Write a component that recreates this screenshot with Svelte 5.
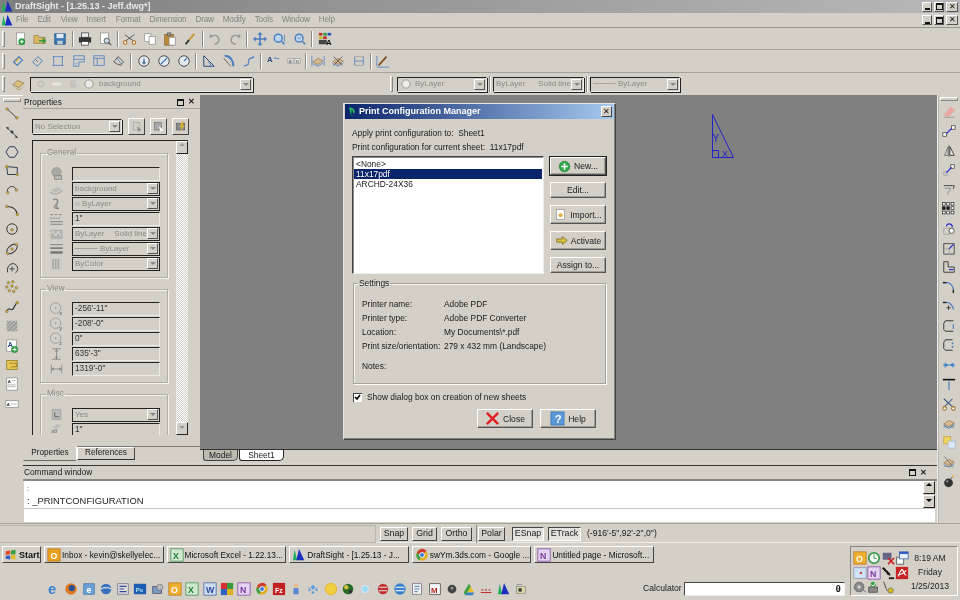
<script>
const BL='#4a7cc0', DK='#3a3a3a', YE='#d8b030', GR='#2fa84a', GY='#9a9a96';
const L=(d,c=BL,w=1.1)=>`<path d="${d}" fill="none" stroke="${c}" stroke-width="${w}"/>`;
const F=(d,c)=>`<path d="${d}" fill="${c}"/>`;
const R=(x,y,w,h,f,s='none')=>`<rect x="${x}" y="${y}" width="${w}" height="${h}" fill="${f}" stroke="${s}" stroke-width="0.8"/>`;
const C=(x,y,r,f,s='none',w=1)=>`<circle cx="${x}" cy="${y}" r="${r}" fill="${f}" stroke="${s}" stroke-width="${w}"/>`;
const N=(x,y,c=YE)=>C(x,y,1.5,c,'#555',0.5);
const T=(x,y,t,c='#222',s=8,b='bold')=>`<text x="${x}" y="${y}" font-family="Liberation Sans" font-size="${s}" font-weight="${b}" fill="${c}">${t}</text>`;
const plus=(x,y)=>C(x,y,3.6,GR,'#1c7a30',0.6)+L(`M${x-2} ${y}h4M${x} ${y-2}v4`,'#fff',1.1);
const page=(x,y,w,h)=>R(x,y,w,h,'#fff','#8a8a8a');
const layer=F('M2 9l6-4 6 3-6 4z','#d8b890')+L('M2 9l6-4 6 3-6 4z','#8a6a40',.7)+L('M2 11l6 3 6-4',BL,.9);
const logo=F('M3 2L1 14h5z','#20b060')+F('M8 1L5 14h9z','#1a2fc0');

const icons={
 new:page(4,1,9,13)+plus(10,11),
 open:F('M1 4h5l1 2h7v7H1z','#d8b860')+L('M1 4h5l1 2h7v7H1z','#8a7030',.7)+L('M7 10h7m-3-3l3 3-3 3','#2a9a40',1.5),
 save:R(2,2,12,12,'#3a78b8','#24507f')+R(4,2,8,5,'#dfe8f2')+R(5,10,6,4,'#c8ccd0'),
 print:R(4,1,8,5,'#eee','#333')+R(1,6,14,6,'#333')+R(4,11,8,4,'#fff','#333'),
 prev:page(3,1,9,12)+C(10,10,3,'#cde','#555',1.1)+L('M12 12l3 3','#555',1.6),
 cut:L('M2 3l11 8M13 3L2 11','#555',1.1)+C(2.5,12,2,'#fff','#b86a10',1.2)+C(12.5,12,2,'#fff','#b86a10',1.2),
 copy:page(2,2,7,9)+page(7,5,7,9),
 paste:R(2,3,10,12,'#b88a3a','#7a5a20')+R(5,1,4,3,'#999','#555')+page(7,6,7,9),
 brush:L('M3 14L7 9','#333',2.2)+L('M7 9L13 2','#d09030',2),
 undo:L('M4 5c5-3 10 1 8 6-1 2-3 3-5 3',GY,1.6)+F('M2 7V2l4 3z',GY),
 redo:L('M12 5c-5-3-10 1-8 6 1 2 3 3 5 3',GY,1.6)+F('M14 7V2l-4 3z',GY),
 pan:L('M8 2v12M2 8h12',BL,1.8)+F('M8 0l3 3H5zM8 16l3-3H5zM0 8l3-3v6zM16 8l-3-3v6z',BL),
 zoom:C(6,7,4.5,'#bcd6f0',BL,1.6)+L('M10 11l3 3',BL,1.8)+L('M13 3v8',BL,.9),
 zoom2:C(7,7,4.5,'#bcd6f0',BL,1.6)+L('M11 11l3 3',BL,1.8)+L('M5 7h4',BL,.9),
 layers:R(1,1,4,3,'#c02a2a')+R(6,1,4,3,'#2aa040')+R(11,1,4,3,'#2a50c0')+R(1,5,4,3,'#c0c020')+R(6,5,4,3,'#c02a2a')+R(1,9,9,5,'#444')+T(9,15,'A','#111',9),
 d1:L('M3 9l6-6 4 4-6 6z',BL,1.4)+L('M5 9l4-4',YE,1.6),
 d2:L('M2 9l6-6 5 5-6 6z',BL,1.1)+L('M6 7l2 2','#555'),
 d3:L('M2 3h12M2 13h12M3 2v12M13 2v12',BL,.9),
 d4:L('M2 2h12v7H8v5H2z',BL,.9)+L('M2 6h12M5 10v2',BL,.9),
 d5:L('M2 2h12v11H2zM2 5h12M6 5v8',BL,.9),
 d6:L('M2 9l5-6 6 6-3 4-5-2z',DK,.9)+L('M6 5l5 7',BL,.9),
 c1:C(8,8,6,'#e4eaf2',DK,1)+L('M8 5v4',BL,1.5)+N(8,10,'#4a7cc0'),
 c2:C(8,8,6,'#e4eaf2',DK,1)+L('M4 12l8-8',BL,1.5),
 c3:C(8,8,6,'#e4eaf2',DK,1)+L('M8 8l4-4',BL,1.5),
 a1:L('M2 14V2l12 12z','#2a4a80',1.1)+L('M7 9c2 1 3 3 3 5',BL),
 a2:L('M3 2c6 0 10 5 10 12',BL,2.2)+L('M2 5l8 9',DK,.8),
 a3:L('M2 14l5-2 1-6 6-3',BL,1.3),
 t1:T(1,9,'A','#2a4a80',9)+L('M9 5c2-2 3 2 6 0',BL),
 t2:R(1,5,6,6,'#e8e8e8','#999')+R(9,5,6,6,'#e8e8e8','#999')+T(2,10,'a','#666',6)+T(10,10,'o','#666',6),
 lay1:layer+L('M1 2v12M15 2v12',BL,.8),
 lay2:layer+L('M3 3l10 10M13 3L3 13',DK,.8),
 lay3:L('M3 3v10M13 3v10M3 8h10',BL,.9)+L('M3 3h10M3 13h10',GY,.8),
 pen:L('M3 13L12 3','#7a5020',2)+L('M1 15h14',BL,.9)+L('M1 2v12',BL,.9),
 layerbig:F('M2 9l6-5 7 3-6 5z','#d8c080')+L('M2 9l6-5 7 3-6 5z','#806a30',.7)+F('M2 11l7 4 6-4-6 3z','#b89040'),
 line:L('M2 3L14 14',DK,1)+N(2.5,3.5)+N(13.5,13.5),
 pline:L('M2 3L14 14',DK,1)+N(8,8,'#333')+F('M1 2l4 1-2 2z',DK)+F('M15 15l-4-1 2-2z',DK),
 hex:L('M5 2h6l4 6-4 6H5L1 8z','#2a3a50',1.1),
 rect:L('M2 3l12 1v8H3z','#2a3a50',1.1)+N(2,3)+N(14,12),
 arc:L('M3 11C1 4 11 1 13 8','#333',1.1)+N(3,11)+N(13,8),
 arc2:L('M2 4c6 0 11 3 12 9','#333',1.2)+N(2,4)+N(14,13),
 circ:C(8,8,6,'none','#333',1.1)+N(8,9),
 ell:`<ellipse cx="8" cy="8" rx="7" ry="4" transform="rotate(-40 8 8)" fill="none" stroke="#333" stroke-width="1.1"/>`+N(8,8)+N(13,3)+N(3,13),
 earc:L('M3 13C1 5 9 0 13 5s-1 8-1 9','#333',1.1)+L('M5 9h6M8 6v6','#333',.9),
 pts:N(4,3)+N(9,2)+N(2,8)+N(8,7)+N(13,9)+N(5,12)+N(10,13),
 spline:L('M2 13c3-7 5 2 8-4s2-4 4-6','#333',1.3)+N(2,13)+N(14,3),
 hatch:R(2,2,12,12,'#9e9e9a')+L('M2 5l3-3M2 9l7-7M2 13l11-11M6 14l8-8M10 14l4-4','#d0d0cc',.9),
 atxt:page(2,1,11,13)+T(3,9,'A','#2a4a80',8)+plus(11,12),
 note:R(2,3,12,10,'#e8c850','#8a7020')+L('M5 6h8v4H8l-2 2','#8a7020',.8),
 doc:page(2,1,12,14)+T(3,7,'A','#333',5)+L('M8 4h4M3 9h9M3 11h9',GY,.8),
 doc2:page(1,4,14,8)+T(2,10,'A','#333',5)+L('M7 8h6',GY,.8),
 eraser:F('M2 11L10 2l5 4-7 7H4z','#e8a8a0')+L('M2 14h12','#999',1),
 move:R(1,10,4,4,'#fff','#333')+R(11,2,4,4,'#fff','#333')+L('M5 11l6-6','#3030d0',1.6),
 mirror:L('M3 13L7 3v10z','#555',.8)+F('M9 3l5 10H9z','#e8e8e8')+L('M9 3l5 10H9z','#222',.9)+L('M8 1v14','#444',.6),
 copyb:L('M2 10h4v4H2z',GY,.8)+R(10,2,4,4,'#fff','#333')+L('M5 11l6-6','#3030d0',1.6),
 offset:L('M2 3h12l-1 4',DK,1)+L('M3 6h7l-4 7','#777',.8),
 array:[2,7,12].flatMap(x=>[2,7,12].map(y=>R(x-1.6,y-1.6,3.2,3.2,x==7&&y==7||x==2&&y==7?'#222':'#fff','#222'))).join(''),
 rotate:L('M2 7h7v7H2z',GY,.8)+L('M5 5C6 1 11 1 12 6','#3030d0',1.5)+C(11,10,3,'#fff','#333',.9),
 scale:L('M2 3h12v12H2z','#333',.9)+L('M2 9h6v6',GY,.8)+L('M8 9l5-5','#3030d0',1.4),
 stretch:L('M2 2h5v6h7v6H2z','#333',1)+L('M8 11h5','#3030d0',1.4),
 fillet:L('M1 3h5c3 0 7 4 7 8',BL,1.4)+L('M1 3h4','#222',1.6)+L('M13 11v4','#222',1.6),
 fillet2:L('M1 4h5c3 0 7 4 7 8',BL,1.4)+L('M1 4h4','#222',1.6)+L('M5 10h5M7.5 7.5v5','#222',.9),
 brk:L('M13 2H4L2 5v7l2 2h9','#333',1.1)+L('M13 6v5',BL,1.4),
 brk2:L('M12 2H4L2 5v7l2 2h8','#333',1.1)+L('M12 5v2M12 9v2',BL,1.8),
 join:L('M1 8h14','#3a80d0',1.1)+F('M7 8L3 5v6zM9 8l4-3v6z','#3a80d0'),
 trim:L('M1 3h14','#111',1.8)+L('M8 5v10',BL,1.4),
 sci:L('M2 2l10 9M12 2L3 11','#3a5a80',1.2)+C(3,13,2,'#fff','#a07020',1.2)+C(13,13,2,'#fff','#a07020',1.2),
 hlay:R(2,8,12,6,'#aaa')+L('M3 14l5-6M7 14l5-6','#eee',.8)+layer,
 squares:R(2,2,8,8,'#f0d860','#c0a030')+R(7,7,8,8,'#dce8f8','#a0b8d8'),
 lay4:layer+L('M3 2l10 12',DK,.6)+L('M2 13h10','#888',.8),
 bomb:C(7.5,10,5,'#333')+C(6,8.5,1.3,'#999')+L('M10 6l2-3','#666',1.1)+C(12.5,2.5,1.2,'#e8b030'),
};
const tb1=['new','open','save','|','print','prev','|','cut','copy','paste','brush','|','undo','redo','|','pan','zoom','zoom2','|','layers'];
const tb2=['d1','d2','d3','d4','d5','d6','|','c1','c2','c3','|','a1','a2','a3','|','t1','t2','|','lay1','lay2','lay3','|','pen'];
const left=['line','pline','hex','rect','arc','arc2','circ','ell','earc','pts','spline','hatch','atxt','note','doc','doc2'];
const right=['eraser','move','mirror','copyb','offset','array','rotate','scale','stretch','fillet','fillet2','brk','brk2','join','trim','sci','hlay','squares','lay4','bomb'];
const menus=[['File',9],['Edit',10],['View',9],['Insert',10],['Format',9],['Dimension',9],['Draw',9],['Modify',9],['Tools',9],['Window',9],['Help',0]];

const pIcon={
 ball:C(8,6,5.5,'#a8a8a4','#888',.5)+R(6,10,8,4,'#bbb','#777'),
 lay:F('M1 10l7-4 7 2-7 4z','#bcbcb8')+L('M1 12l7 2 7-4','#999',1),
 col:L('M4 3c5-2 7 2 4 5s-1 6 3 5','#888',1.6)+C(7,11,2,'#aaa','#777',.6),
 dash:L('M1 3h3m2 0h3m2 0h3M1 7h2m1 0h2m1 0h2m1 0h2M1 11h14M1 14h14','#777',1),
 lt:R(1,3,14,11,'#b4b4b0')+L('M1 8l3-3 3 5 3-5 3 5','#eee',.9),
 lw:L('M1 3h14','#777',1)+L('M1 7h14','#777',1.8)+L('M1 12h14','#777',2.8),
 tra:R(2,2,12,12,'#c8c8c4')+L('M4 2v12M7 2v12M10 2v12','#a4a4a0',1.6),
 x:C(7,7,6,'none','#999',1)+C(7,7,1.2,'#aaa')+T(11,15,'x','#777',6),
 y:C(7,7,6,'none','#999',1)+C(7,7,1.2,'#aaa')+T(11,15,'y','#777',6),
 z:C(7,7,6,'none','#999',1)+C(7,7,1.2,'#aaa')+T(11,15,'z','#777',6),
 h:L('M3 2h10M3 14h10M8 2v12','#888',1)+F('M8 2l2 3H6zM8 14l2-3H6z','#888'),
 w:L('M2 3v10M14 3v10M2 8h12','#888',1)+F('M2 8l3-2v4zM14 8l-3-2v4z','#888'),
 ucs:R(3,2,10,11,'#bbb','#999')+L('M6 10V5M6 10h5','#666',1.2),
 sc:F('M3 5l6-4 5 2-6 3z','#bbb')+T(2,11,'x0','#777',6),
};
const general=[
 ['ball','text',''],['lay','combo','background'],['col','combo','○ ByLayer'],['dash','text','1"'],
 ['lt','combo2','ByLayer','Solid line'],['lw','combo','──── ByLayer'],['tra','combo','ByColor']];
const view=[['x','-256\'-11"'],['y','-208\'-0"'],['z','0"'],['h','635\'-3"'],['w','1319\'-0"']];
const settings=[['Printer name:','Adobe PDF'],['Printer type:','Adobe PDF Converter'],['Location:','My Documents\\*.pdf'],['Print size/orientation:','279 x 432 mm (Landscape)']];

const tasks=[
 {t:'Inbox - kevin@skellyelec...',i:R(1,1,14,14,'#e8a020','#b87010')+T(4,12,'O','#fff',10)},
 {t:'Microsoft Excel - 1.22.13...',i:R(1,1,14,14,'#cfe8d0','#3a8a4a')+T(3.5,12,'X','#1f7a3a',10)},
 {t:'DraftSight - [1.25.13 - J...',i:logo},
 {t:'swYm.3ds.com - Google ...',i:C(8,8,6.5,'#e0b020')+F('M8 8L2 6a6.5 6.5 0 0 1 11-3z','#d03a30')+F('M8 8l-3 6a6.5 6.5 0 0 1-3-8z','#3aa048')+C(8,8,2.8,'#3a78d8','#fff',1)},
 {t:'Untitled page - Microsoft...',i:R(1,1,14,14,'#e4d4f0','#7a3aa0')+T(3.5,12,'N','#7a3aa0',10)}
];
const sq=(bg,bd,t,c)=>R(1,1,14,14,bg,bd)+T(3.5,12,t,c,10);
const quick=[
 T(1,14,'e','#3a80d0',17),
 C(8,8,6.5,'#e07820')+C(9,7,3.5,'#2a5090'),
 R(2,2,12,12,'#6aa0d8','#3a70a8')+T(5,12,'e','#fff',10),
 C(8,8,6,'#3a70c0')+L('M2 8c4-2 8-2 12 0','#ddd',1.3),
 R(2,2,12,12,'#ddd','#668')+L('M4 5h8M4 8h5M4 11h8','#3a4a90',1.2),
 R(1,2,14,12,'#1a5fb0')+T(3,11,'Ps','#bde',7),
 R(2,5,10,8,'#7a9ac0','#446')+C(10,6,3.5,'#bbb','#666',.7),
 sq('#f0b030','#b87010','O','#fff'),
 sq('#cfe8d0','#3a8a4a','X','#1f7a3a'),
 sq('#d0dcf0','#3a5aa0','W','#2a4aa0'),
 R(1,1,7,7,'#d83030')+R(8,1,7,7,'#3a9a40')+R(1,8,7,7,'#3060c0')+R(8,8,7,7,'#e0b020'),
 sq('#e4d4f0','#7a3aa0','N','#7a3aa0'),
 C(8,8,6.5,'#e0b020')+F('M8 8L2 6a6.5 6.5 0 0 1 11-3z','#d03a30')+F('M8 8l-3 6a6.5 6.5 0 0 1-3-8z','#3aa048')+C(8,8,2.8,'#3a78d8','#fff',1),
 R(1,1,14,14,'#c02020')+T(3.5,12,'Fz','#fff',8),
 C(8,4,2.5,'#e8b880')+R(5,7,6,7,'#5a8ad0'),
 F('M8 3l3 3-3 3-3-3zM3 6l3 3-3 2zM13 6l-3 3 3 2zM8 10l2 2-2 2-2-2z','#60a0e0'),
 C(8,8,6.5,'#f0d040','#e8b020',1),
 C(8,8,6,'#2a6a2a')+C(6,6,2.5,'#d0c040')+C(11,11,2,'#333'),
 C(8,8,4,'#a0d8f0','#d0f0ff',1),
 C(8,8,6,'#c03030')+L('M3 6h10M3 10h10','#ddd',1.2),
 C(8,8,6.5,'#3a80c8')+L('M3 6h10M3 10h10','#fff',1.4),
 R(3,2,10,12,'#f4f4f0','#668')+L('M5 5h6M5 8h6M5 11h4','#3a6ab0',1),
 R(2,2,12,12,'#fff','#333')+T(3.5,12,'M','#b02020',9),
 C(8,8,5,'#444')+C(8,7,1.5,'#999'),
 F('M8 2l6 10H2z','#e8c030')+F('M2 12h12l-2 3H4z','#3a80d0')+F('M8 2L2 12l2 3 6-10z','#3aa048'),
 L('M2 12h12M3 9h2M7 9h2M11 9h2','#c03030',1.4),
 logo,
 R(3,5,10,8,'#d8d8a0','#888')+C(7,9,2.2,'#444')+L('M3 3h6','#888',1),
];
const tray=[
 sq('#f0b030','#b87010','O','#fff'),
 C(8,8,6,'#fff','#3a9a4a',2)+L('M8 4v4l3 1','#3a9a4a',1.2),
 R(2,2,10,8,'#668')+L('M8 8l7 7M15 8l-7 7','#d02020',1.8),
 R(2,7,8,8,'#fff','#333')+R(5,1,10,8,'#eaf2fc','#2a50a0')+R(5,1,10,2.5,'#3060c0'),
 R(1,2,14,12,'#cfe4f8','#88a')+C(9,8,1.5,'#d04a4a'),
 sq('#e4d4f0','#7a3aa0','N','#7a3aa0'),
 L('M2 2l8 8','#111',2.2)+F('M9 13h6v2H9z','#111')+F('M11 11L6 9l3-2z','#111'),
 R(1,1,14,14,'#c82020')+L('M4 12c2-7 4-9 5-7s2 6 4 5M3 10c4 0 8-3 10-5','#fff',1.4),
 C(7,8,5.5,'#8a8a8a','#555',.8)+C(7,8,2,'#d0d0cc')+L('M11 11l4 3','#668',1),
 R(2,8,10,6,'#888','#444')+C(7,5,3,'#3aa048')+L('M5 5l2 2 3-4','#fff',1),
 L('M3 2l3 8c1 3 4 4 7 2',DK,1)+C(11,12,3,'#d8c020','#555',.7),
];
</script>

<div class="app">
 <div class="titlebar">
  <svg class="ic logo" viewBox="0 0 16 16">{@html logo}</svg>
  <span class="ttl">DraftSight - [1.25.13 - Jeff.dwg*]</span>
  <div class="winbtns tall">
   <span class="wb"><b class="min"></b></span>
   <span class="wb"><b class="res"></b></span>
   <span class="wb wide">✕</span>
  </div>
 </div>
 <div class="menubar">
  <svg class="ic logo" viewBox="0 0 16 16">{@html logo}</svg>
  <div class="menus">{#each menus as m}<span style:margin-right="{m[1]}px">{m[0]}</span>{/each}</div>
  <div class="winbtns">
   <span class="wb"><b class="min"></b></span>
   <span class="wb"><b class="res"></b></span>
   <span class="wb wide">✕</span>
  </div>
 </div>
 <div class="tbar t1">
  <i class="grip"></i>
  {#each tb1 as n}
   {#if n==='|'}<i class="sep"></i>{:else}<span class="ti"><svg class="ic" viewBox="0 0 16 16">{@html icons[n]}</svg></span>{/if}
  {/each}
 </div>
 <div class="tbar t2">
  <i class="grip"></i>
  {#each tb2 as n}
   {#if n==='|'}<i class="sep"></i>{:else}<span class="ti"><svg class="ic" viewBox="0 0 16 16">{@html icons[n]}</svg></span>{/if}
  {/each}
 </div>
 <div class="tbar t3">
  <i class="grip"></i>
  <span class="layic"><svg class="ic" viewBox="0 0 16 16">{@html icons.layerbig}</svg></span>
  <div class="combo layercombo">
   <svg class="ic sm" viewBox="0 0 16 16">{@html C(8,8,4,'none','#b0b0ac',1)}</svg>
   <svg class="ic sm" viewBox="0 0 16 16">{@html F('M2 6h10l2 2-2 2H2z','#e8e6e0')}</svg>
   <svg class="ic sm" viewBox="0 0 16 16">{@html R(4,7,8,6,'#c4c2bc')+L('M6 7V4h4v3','#b8b6b0',1.2)}</svg>
   <svg class="ic sm" viewBox="0 0 16 16">{@html C(8,8,5.5,'#ecebe6','#888',1)}</svg>
   <span class="gt">background</span><em class="arr"></em>
  </div>
  <i class="grip g2"></i>
  <div class="combo c90">
   <svg class="ic sm" viewBox="0 0 16 16">{@html C(8,8,5.5,'#ecebe6','#888',1)}</svg><span class="gt">ByLayer</span><em class="arr"></em>
  </div>
  <i class="sep sp3"></i>
  <div class="combo c91"><span class="gt lt">ByLayer</span><span class="gt">Solid line</span><em class="arr"></em></div>
  <i class="sep sp3"></i>
  <div class="combo c90"><span class="gt">──── ByLayer</span><em class="arr"></em></div>
 </div>

 <div class="main">
  <div class="vtb left">
   <i class="vgrip"></i>
   {#each left as n}<svg class="ic" viewBox="0 0 16 16">{@html icons[n]}</svg>{/each}
  </div>
  <div class="center">
   <div class="upper">
    <aside class="props">
     <div class="phead"><span>Properties</span><span class="phbtn"><b class="res"></b><span class="phx">✕</span></span></div>
     <div class="selrow">
      <div class="combo sel"><span class="gt">No Selection</span><em class="arr"></em></div>
      <span class="sqb"><svg class="ic sm" viewBox="0 0 16 16">{@html L('M3 2h8v10H3z','#999',.8)+F('M8 7l6 5-3 1-1 2z','#888')}</svg></span>
      <span class="sqb"><svg class="ic sm" viewBox="0 0 16 16">{@html R(2,2,9,10,'#aaa','#666')+F('M8 7l6 5-3 1-1 2z','#fff')}</svg></span>
      <span class="sqb"><svg class="ic sm" viewBox="0 0 16 16">{@html R(2,3,11,9,'#8a8a8a','#555')+F('M9 1L6 8h3l-2 6 6-8h-3l2-5z','#d8b030')}</svg></span>
     </div>
     <div class="pane">
      <div class="pcontent">
       <fieldset class="grp gen">
        <legend>General</legend>
        {#each general as r}
         <div class="prow">
          <svg class="pi" viewBox="0 0 16 16">{@html pIcon[r[0]]}</svg>
          {#if r[1]==='text'}
           <div class="fld">{r[2]}</div>
          {:else if r[1]==='combo2'}
           <div class="fld dd"><span class="gt lt2">{r[2]}</span><span class="gt">{r[3]}</span><em class="arr"></em></div>
          {:else}
           <div class="fld dd"><span class="gt">{r[2]}</span><em class="arr"></em></div>
          {/if}
         </div>
        {/each}
       </fieldset>
       <fieldset class="grp vw">
        <legend>View</legend>
        {#each view as r}
         <div class="prow"><svg class="pi" viewBox="0 0 16 16">{@html pIcon[r[0]]}</svg><div class="fld">{r[1]}</div></div>
        {/each}
       </fieldset>
       <fieldset class="grp misc">
        <legend>Misc</legend>
        <div class="prow"><svg class="pi" viewBox="0 0 16 16">{@html pIcon.ucs}</svg><div class="fld dd"><span class="gt">Yes</span><em class="arr"></em></div></div>
        <div class="prow"><svg class="pi" viewBox="0 0 16 16">{@html pIcon.sc}</svg><div class="fld">1"</div></div>
       </fieldset>
      </div>
      <div class="pscroll">
       <span class="sb"><i class="up"></i></span>
       <span class="sb"><i class="down"></i></span>
      </div>
     </div>
     <div class="ptabs">
      <span class="ptab on">Properties</span>
      <span class="ptab">References</span>
     </div>
    </aside>
    <div class="work">
     <div class="canvas">
      <svg class="tri" width="24" height="46" viewBox="0 0 24 46">
       <path d="M1.5 1.5V44.5H22.5ZM1.5 37.5H7.5V44.5M1.5 24" fill="none" stroke="#2424c4" stroke-width="1"/>
       <text x="1.5" y="29" font-family="Liberation Sans" font-size="10" fill="#2424c4">Y</text>
       <text x="11" y="44" font-family="Liberation Sans" font-size="9" fill="#2424c4">X</text>
      </svg>
      <div class="dialog">
       <div class="dtitle">
        <svg class="ic dl" viewBox="0 0 16 16">{@html F('M3 2c5 0 9 3 8 7s-4 5-5 5z','#22c060')+F('M7 4l3 8-4 2z','#0a246a')}</svg>
        <span>Print Configuration Manager</span>
        <span class="dx">✕</span>
       </div>
       <div class="dbody">
        <div class="dline">Apply print configuration to:&nbsp; Sheet1</div>
        <div class="dline">Print configuration for current sheet:&nbsp; 11x17pdf</div>
        <div class="listrow">
         <div class="list">
          <div>&lt;None&gt;</div>
          <div class="sel1">11x17pdf</div>
          <div>ARCHD-24X36</div>
         </div>
         <div class="btncol">
          <button class="b def h18"><svg class="ic sm2" viewBox="0 0 16 16">{@html C(8,8,6.5,GR,'#1c7a30',.8)+L('M4 8h8M8 4v8','#fff',2)}</svg>New...</button>
          <button class="b">Edit...</button>
          <button class="b h19"><svg class="ic sm2" viewBox="0 0 16 16">{@html page(3,2,10,12)+C(8,9,2.5,'#e0b040')}</svg>Import...</button>
          <button class="b h19"><svg class="ic sm2" viewBox="0 0 16 16">{@html F('M2 6h7V3l6 5-6 5v-3H2z','#d8c040')+L('M2 6h7V3l6 5-6 5v-3H2z','#6a5a10',.8)}</svg>Activate</button>
          <button class="b">Assign to...</button>
         </div>
        </div>
        <fieldset class="setg">
         <legend>Settings</legend>
         {#each settings as s}
          <div class="srow"><span>{s[0]}</span><span>{s[1]}</span></div>
         {/each}
         <div class="srow notes"><span>Notes:</span></div>
        </fieldset>
        <label class="chk"><span class="box"><svg viewBox="0 0 9 9" width="9" height="9"><path d="M2 4l2 2 3-4" fill="none" stroke="#000" stroke-width="1.6"/></svg></span>Show dialog box on creation of new sheets</label>
        <div class="dfoot">
         <button class="b bw"><svg class="ic sm3" viewBox="0 0 16 16">{@html L('M2 2l12 12M14 2L2 14','#e02020',2.6)}</svg>Close</button>
         <button class="b bw"><svg class="ic sm3" viewBox="0 0 16 16">{@html R(1,1,14,14,'#5a98d8','#3a70b0')+T(5,13,'?','#fff',12)}</svg>Help</button>
        </div>
       </div>
      </div>
     </div>
     <div class="tabstrip">
      <span class="mtab">Model</span>
      <span class="mtab on">Sheet1</span>
     </div>
    </div>
   </div>
   <div class="cmd">
    <div class="chead"><span>Command window</span><span class="phbtn"><b class="res"></b><span class="phx">✕</span></span></div>
    <div class="cbody">
     <div class="ctext"><div class="cl small">:</div><div class="cl">: _PRINTCONFIGURATION</div></div>
     <div class="cscroll"><span class="sb"><i class="up k"></i></span><span class="sb"><i class="down k"></i></span></div>
    </div>
    <div class="cinput"></div>
   </div>
  </div>
  <div class="vtb rightb">
   <i class="vgrip"></i>
   {#each right as n}<svg class="ic" viewBox="0 0 16 16">{@html icons[n]}</svg>{/each}
  </div>
 </div>

 <div class="status">
  <div class="swell"></div>
  <span class="st w28">Snap</span>
  <span class="st w25">Grid</span>
  <span class="st w31">Ortho</span>
  <i class="stsep"></i>
  <span class="st w27">Polar</span>
  <span class="st w32 on">ESnap</span>
  <span class="st w33 on">ETrack</span>
  <span class="coords">(-916'-5",92'-2",0")</span>
 </div>

 <div class="taskbar">
  <div class="tleft">
   <div class="trow">
    <button class="start"><svg class="ic st-i" viewBox="0 0 16 16">{@html F('M1 3l6-1v5l-6 1z','#e04a20')+F('M8 2l6-1v6l-6 .5z','#3aa040')+F('M1 9l6-.5V14l-6-1z','#3060c0')+F('M8 8.5l6-.5v6l-6-1z','#e8b820')}</svg>Start</button>
    {#each tasks as t}
     <button class="task"><svg class="ic" viewBox="0 0 16 16">{@html t.i}</svg><span>{t.t}</span></button>
    {/each}
   </div>
   <div class="qrow">
    <div class="quick">{#each quick as q}<svg class="ic q" viewBox="0 0 16 16">{@html q}</svg>{/each}</div>
    <span class="calc">Calculator</span>
    <div class="calcin">0</div>
   </div>
  </div>
  <div class="tray">
   <div class="trayic">{#each tray as t}<svg class="ic" viewBox="0 0 16 16">{@html t}</svg>{/each}</div>
   <div class="clock"><span>8:19 AM</span><span>Friday</span><span>1/25/2013</span></div>
  </div>
 </div>
</div>

<style>
 :global(body){margin:0;background:#d4d0c8}
 .app{width:960px;height:600px;display:flex;flex-direction:column;background:#d4d0c8;overflow:hidden;font:8.4px/1 "Liberation Sans",Arial,sans-serif;color:#1a1a1a;filter:blur(.3px);box-sizing:border-box}
 .app *{box-sizing:border-box}
 .ic{width:14px;height:14px;flex:none;display:block}
 .sm{width:12px;height:12px}
 .sm2{width:13px;height:13px;margin-right:3px}
 .sm3{width:15px;height:15px;margin-right:3px}
 .logo{width:13px;height:13px;margin-left:1px}
 .titlebar{height:13px;background:linear-gradient(90deg,#7f7f7f,#b8b8b8);display:flex;align-items:center;color:#e8e8e8}
 .ttl{font-size:9px;font-weight:bold;margin-left:1px}
 .menubar{height:15px;display:flex;align-items:center;border-bottom:1px solid #9a9890}
 .menus{display:flex;color:#85857f;margin-left:2px;font-size:8.2px;letter-spacing:-.2px}
 .winbtns{margin-left:auto;display:flex;gap:2px;padding-right:2px}
 .wb{width:10px;height:10px;background:#d4d0c8;border:1px solid;border-color:#fff #555 #555 #fff;display:flex;align-items:center;justify-content:center;font-size:8px;color:#111;line-height:1}
 .wb.wide{width:12px}
 .min{width:5px;height:2px;background:#111;margin-top:5px}
 .res{width:7px;height:7px;border:1px solid #111;border-top-width:2px;display:block}
 .tbar{display:flex;align-items:center;border-bottom:1px solid #a5a39b}
 .t1{height:22px;padding-left:2px}
 .t2{height:23px;padding-left:2px}
 .t3{height:22px;padding-left:2px;border-bottom:none}
 .grip{width:3px;height:16px;border:1px solid;border-color:#fff #8a8880 #8a8880 #fff;flex:none}
 .t1 .grip{margin-right:5px}
 .t2 .grip{margin-right:3px}
 .ti{width:20.2px;display:flex;justify-content:center;flex:none}
 .sep{width:1px;height:16px;background:#8a8880;border-right:1px solid #fff;margin:0 1.2px;flex:none;box-sizing:content-box}
 .layic{width:14px;margin:0 5px 0 6px}
 .combo{height:15px;display:flex;align-items:center;border:1px solid;border-color:#222 #eee #eee #222;box-shadow:1px 1px 0 #222;padding-left:2px;position:relative;flex:none}
 .gt{color:#8a8a86;white-space:nowrap;font-size:8px}
 .arr{margin-left:auto;width:11px;height:11px;background:#d4d0c8;border:1px solid;border-color:#fff #555 #555 #fff;flex:none;position:relative;margin-right:1px}
 .arr::after{content:"";position:absolute;left:2px;top:3px;border:3px solid transparent;border-top:3px solid #888;border-bottom:0}
 .layercombo{width:223px;gap:4px;padding-left:4px}
 .g2{margin:0 4px 0 137px}
 .c90{width:90px;gap:3px}
 .c91{width:91px}
 .lt{margin-right:13px}
 .sp3{margin:0 2px}
 .main{display:flex;height:428px}
 .vtb{width:23px;display:flex;flex-direction:column;align-items:center;gap:5.4px;padding-top:2px;flex:none}
 .vgrip{width:18px;height:4px;border:1px solid;border-color:#fff #8a8880 #8a8880 #fff;margin-bottom:-1.5px;flex:none}
 .left{border-top:1px solid #fff}
 .rightb{border-left:1px solid #eee;box-shadow:inset 1px 0 0 #b8b6ae;gap:5.45px}
 .center{flex:1;display:flex;flex-direction:column;min-width:0}
 .upper{height:368px;display:flex}
 .props{width:177px;display:flex;flex-direction:column;flex:none;padding-top:1px}
 .phead,.chead{display:flex;align-items:center;justify-content:space-between;height:13px;font-size:8.3px;padding:0 4px 0 1px;border-bottom:1px solid #a5a39b}
 .phbtn{display:flex;align-items:center;gap:4px}
 .phbtn .res{width:7px;height:7px}
 .phx{font-size:8px;font-weight:bold;width:8px}
 .selrow{display:flex;align-items:center;margin:9px 0 0 9px}
 .sel{width:90px;margin-right:6px}
 .sqb{width:17px;height:17px;margin-right:5px;border:1px solid;border-color:#fff #444 #444 #fff;display:flex;align-items:center;justify-content:center;flex:none}
 .pane{height:295px;width:156px;margin:5px 0 0 9px;display:flex;border-left:1px solid #222;border-top:1px solid #222;overflow:hidden;flex:none}
 .pcontent{width:143px;padding:7px 0 0 7px;overflow:hidden;flex:none}
 .pscroll{width:12px;display:flex;flex-direction:column;justify-content:space-between;background:repeating-conic-gradient(#fff 0 25%,#d4d0c8 0 50%) 0 0/2px 2px;flex:none}
 .sb{height:13px;width:12px;background:#d4d0c8;border:1px solid;border-color:#fff #222 #222 #fff;position:relative;display:block;flex:none}
 .sb i{position:absolute;left:2px;border:3px solid transparent}
 .up{top:1px;border-bottom:3px solid #999!important;border-top:0!important}
 .down{top:3px;border-top:3px solid #999!important;border-bottom:0!important}
 .k.up{border-bottom-color:#000!important}
 .k.down{border-top-color:#000!important}
 .grp{margin:0;padding:4px 8px 0;border:1px solid #b0aea6;box-shadow:1px 1px 0 #f4f2ec,inset 1px 1px 0 #f4f2ec;width:128px;min-width:0;display:flex;flex-direction:column}
 .grp legend{color:#8a8a86;font-size:8.2px;padding:0 1px;margin-left:-3px;line-height:10px}
 .gen{height:130px;padding-top:8px}
 .vw{height:99px;margin-top:6px;padding-top:7px}
 .misc{height:60px;margin-top:6px;padding-top:8px}
 .prow{height:15px;display:flex;align-items:center;gap:8px;flex:none}
 .pi{width:15px;height:14px;flex:none}
 .fld{width:88px;height:14px;border:1px solid;border-color:#222 #eceae4 #eceae4 #222;display:flex;align-items:center;padding-left:2px;color:#333;font-size:8.3px;background:#d4d0c8;flex:none;overflow:hidden}
 .dd{border-color:#222}
 .lt2{margin-right:10px}
 .ptabs{display:flex;margin-top:11px;border-top:1px solid #7a7870;height:15px;font-size:8.2px}
 .ptab{height:13px;width:58px;display:flex;align-items:center;justify-content:center;border:1px solid;border-color:#fff #444 #333 #fff;background:#d4d0c8}
 .ptab.on{width:54px;height:15px;margin-top:-1px;border-color:#d4d0c8 #fff #6a6a66 #d4d0c8}
 .work{flex:1;display:flex;flex-direction:column;min-width:0}
 .canvas{height:354px;background:#808080;position:relative}
 .tri{position:absolute;left:511px;top:18px}
 .tabstrip{height:14px;display:flex;align-items:flex-start;padding-left:3px;border-top:1px solid #333;gap:1px;font-size:8.4px}
 .mtab{width:35px;height:11px;display:flex;align-items:center;justify-content:center;background:#bdbab2;border:1px solid #444;border-top:none;border-radius:0 0 5px 3px}
 .mtab.on{width:45px;background:#fff;border-color:#222}
 .dialog{position:absolute;left:143px;top:8px;width:273px;height:337px;background:#d4d0c8;border:1px solid;border-color:#e8e6e0 #444 #444 #e8e6e0;box-shadow:inset -1px -1px 0 #808080;display:flex;flex-direction:column}
 .dtitle{height:15px;background:linear-gradient(90deg,#0a246a,#a6caf0);color:#fff;font-weight:bold;font-size:9px;display:flex;align-items:center;padding-left:2px;margin:0 1px;gap:1px;flex:none}
 .dl{width:11px;height:11px}
 .dx{margin-left:auto;margin-right:2px;width:11px;height:11px;background:#d4d0c8;color:#111;border:1px solid;border-color:#fff #444 #444 #fff;font-size:8px;display:flex;align-items:center;justify-content:center;font-weight:normal}
 .dbody{padding:7px 9px 0 8px;display:flex;flex-direction:column}
 .dline{height:14px;display:flex;align-items:center;white-space:nowrap}
 .listrow{display:flex;margin-top:2px;gap:6px;height:118px}
 .list{width:192px;height:118px;background:#fff;border:1px solid;border-color:#444 #eee #eee #444;padding:2px 1px;box-shadow:inset 1px 1px 0 #888}
 .list div{padding-left:2px;height:10px;line-height:10px;white-space:nowrap}
 .list .sel1{background:#0a246a;color:#fff}
 .btncol{display:flex;flex-direction:column;gap:7px;margin-top:1px}
 .b{width:56px;height:16px;font:8.6px "Liberation Sans",Arial,sans-serif;color:#1a1a1a;background:#d4d0c8;border:1px solid;border-color:#fff #555 #555 #fff;box-shadow:inset -1px -1px 0 #a09e96;display:flex;align-items:center;justify-content:center;padding:0;flex:none}
 .h18{height:18px}
 .h19{height:19px}
 .def{outline:1px solid #222}
 .setg{margin:4px 0 0 1px;width:253px;height:106px;padding:9px 0 0 8px;border:1px solid #a5a39b;box-shadow:1px 1px 0 #fff,inset 1px 1px 0 #f4f2ec;min-width:0;display:flex;flex-direction:column}
 .setg legend{padding:0 1px;margin-left:-4px;line-height:10px;font-size:8.4px}
 .srow{height:14px;display:flex;align-items:center;white-space:nowrap}
 .srow span:first-child{width:82px;flex:none}
 .notes{margin-top:6px}
 .chk{display:flex;align-items:center;margin:8px 0 0 1px;height:10px;gap:5px}
 .box{width:9px;height:9px;background:#fff;border-top:1px solid #444;border-left:1px solid #444;display:block;flex:none}
 .box svg{margin:-1px 0 0 -1px}
 .dfoot{display:flex;justify-content:flex-end;gap:7px;margin-top:7px;padding-right:10px}
 .bw{width:56px;height:19px}
 .cmd{height:60px;display:flex;flex-direction:column;border-top:1px solid #d8d6d0;padding-top:1px}
 .chead{height:16px;border-top:1px solid #333;border-bottom:2px solid #8a8880}
 .chead .phbtn{margin-right:5px}
 .cbody{height:28px;display:flex;border-bottom:1px solid #c8c6be;background:#fff;margin-left:1px;margin-right:2px}
 .ctext{flex:1;padding:4px 0 0 3px;font-size:9.4px;color:#222}
 .cl{height:13px;line-height:13px}
 .small{height:9px;line-height:7px;font-size:8px;color:#555}
 .cscroll{width:12px;display:flex;flex-direction:column;justify-content:space-between;background:#d4d0c8}
 .cinput{height:13px;background:#fff;margin-left:1px;margin-right:2px}
 .status{height:20px;display:flex;align-items:center;border-top:1px solid #a5a39b;border-bottom:1px solid #f0eee8;font-size:8.8px;padding-top:1px}
 .swell{width:376px;height:18px;border:1px solid #b8b6ae;border-left:none;margin-right:4px;flex:none}
 .st{height:14px;display:flex;align-items:center;justify-content:center;border:1px solid;border-color:#fff #444 #444 #fff;margin-right:4px;flex:none}
 .st.on{border-color:#444 #fff #fff #444;background:#e4e2dc}
 .w28{width:28px}.w25{width:25px}.w31{width:31px}.w32{width:32px}.w33{width:33px}
 .w27{width:27px;margin-right:7px}
 .stsep{width:1px;height:18px;background:#8a8880;margin-right:1px}
 .coords{margin-left:2px;font-size:8.6px}
 .taskbar{height:56px;display:flex;padding-top:3px}
 .tleft{flex:1;padding-left:2px}
 .trow{display:flex;gap:3px;height:17px}
 .start,.task{height:17px;background:#d4d0c8;border:1px solid;border-color:#fff #444 #444 #fff;display:flex;align-items:center;padding:0 2px;font:8.3px "Liberation Sans",Arial,sans-serif;color:#111;flex:none;overflow:hidden}
 .start{width:39px;font-weight:bold;font-size:9px;gap:2px}
 .st-i{width:12px;height:12px}
 .task{width:119.6px;gap:1px;white-space:nowrap}
 .qrow{display:flex;align-items:center;margin-top:18px;height:15px}
 .quick{display:flex;width:627px;gap:3.3px;padding-left:45px;flex:none}
 .q{width:14px;height:14px}
 .calc{width:41px;flex:none;font-size:8.6px;margin-left:14px}
 .calcin{width:161px;height:14px;background:#fff;border:1px solid;border-color:#444 #eee #eee #444;text-align:right;padding:2px 3px;font-weight:bold;font-size:9px;font-family:"DejaVu Sans Mono",monospace;flex:none}
 .tray{width:108px;height:50px;margin-right:2px;border:1px solid;border-color:#8a8880 #fff #fff #8a8880;display:flex;padding:4px 0 0 2px}
 .trayic{display:grid;grid-template-columns:repeat(4,14px);grid-auto-rows:14.5px;width:56px;flex:none}
 .clock{flex:1;display:flex;flex-direction:column;align-items:center;gap:5.6px;padding:3px 6px 0 0;font-size:8.6px;color:#222}
</style>
